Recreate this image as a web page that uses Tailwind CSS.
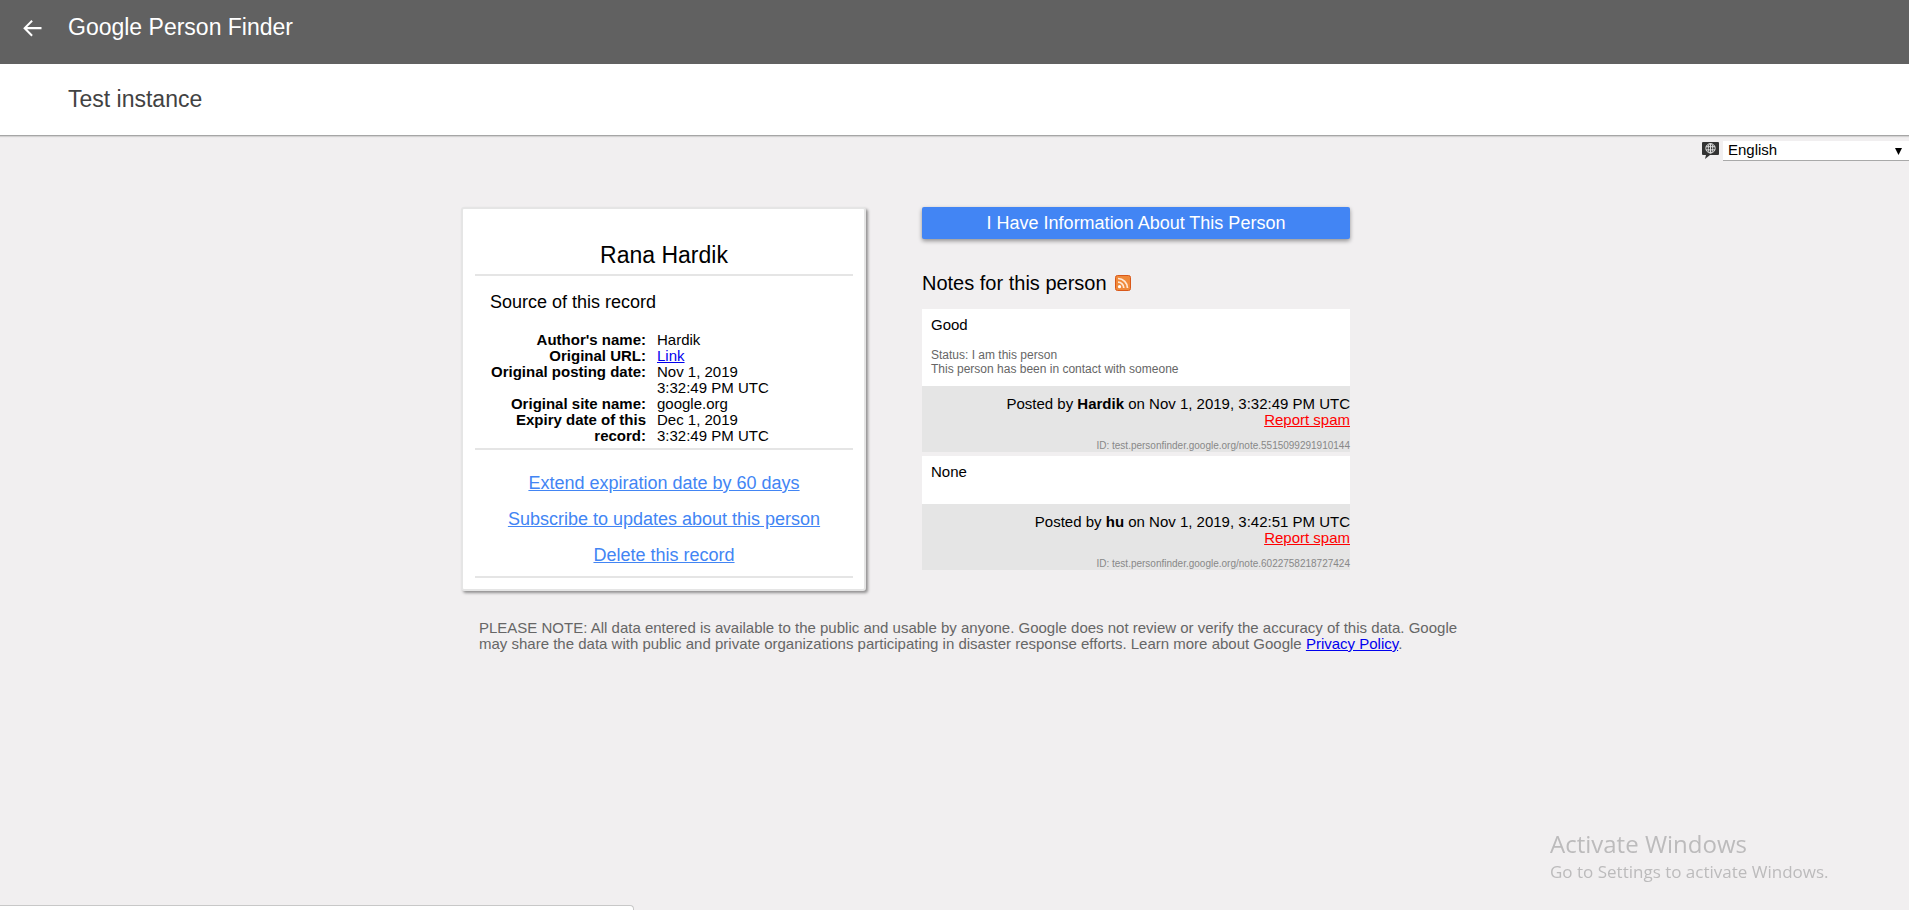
<!DOCTYPE html>
<html lang="en">
<head>
<meta charset="utf-8">
<meta name="viewport" content="width=device-width, initial-scale=1">
<title>Google Person Finder</title>
<script src="https://cdn.jsdelivr.net/npm/@tailwindcss/browser@4"></script>
</head>
<body class="relative min-h-screen overflow-x-hidden bg-[#f1eff0] font-['Liberation_Sans',Arial,sans-serif] text-[15px] leading-4 text-black">
<header>
  <div class="flex items-center bg-[#616161] pt-[13px] pb-[23px] pl-5 text-white">
    <a href="#" aria-label="Back" class="mr-6 block">
      <svg class="size-6" viewBox="0 0 24 24" fill="currentColor" aria-hidden="true"><path d="M21.500 12H7.200l5.600-5.600-1.400-1.400L3.200 13.200l8.200 8.200 1.400-1.400L7.200 14.200h14.300z"/></svg>
    </a>
    <span class="text-[23px] leading-7">Google Person Finder</span>
  </div>
  <div class="border-b border-[#a6a6a6] bg-white pt-[21px] pb-[22px] pl-[68px] shadow-[0_1px_1px_rgba(0,0,0,0.12)]">
    <h1 class="text-[23px] leading-7 text-[#424242]">Test instance</h1>
  </div>
</header>

<div class="flex items-start justify-end gap-1 pt-[5px]">
  <svg class="mt-px h-[17px] w-[17px]" viewBox="0 0 17 17" aria-hidden="true">
    <path d="M1 0h15q1 0 1 1v11q0 1-1 1H8l-5 4 1-4H1q-1 0-1-1V1q0-1 1-1z" fill="#333"/>
    <g fill="none" stroke="#ddd" stroke-width="1"><circle cx="8.500" cy="6.300" r="4.700"/><ellipse cx="8.500" cy="6.300" rx="2.200" ry="4.700"/><path d="M8.500 1.500v9.600M4 4.700h9M4 7.900h9"/></g>
  </svg>
  <div class="relative w-[186px]">
    <select aria-label="Language" class="block h-5 w-full appearance-none border-b border-[#a9a9a9] bg-white pb-px pl-[5px] text-[15px] leading-4"><option>English</option></select>
    <svg class="pointer-events-none absolute top-[7px] right-[7px] h-[7px] w-[7px]" viewBox="0 0 7 7" aria-hidden="true"><path d="M0 0h7L3.500 7z"/></svg>
  </div>
</div>

<main class="mx-auto max-w-[987px] pt-[46px]">
  <div class="flex items-start gap-14">
    <section class="w-[405px] shrink-0 rounded-[3px] border-2 border-[#e5e5e5] bg-white pt-8 pr-[11px] pb-[11px] pl-3 shadow-[2px_2px_3px_rgba(0,0,0,0.4)]">
      <h2 class="border-b-2 border-[#e5e5e5] pb-[5px] text-center text-[23px] leading-7">Rana Hardik</h2>
      <div class="border-b-2 border-[#e5e5e5] px-[15px] pt-3.5 pb-1">
        <h3 class="text-[18px] leading-6">Source of this record</h3>
        <table class="mt-[18px] border-collapse text-left align-top">
          <tbody>
            <tr><th scope="row" class="w-[156px] p-0 text-right align-top font-bold">Author's name:</th><td class="w-[130px] py-0 pr-0 pl-[11px] align-top">Hardik</td></tr>
            <tr><th scope="row" class="p-0 text-right align-top font-bold">Original URL:</th><td class="py-0 pr-0 pl-[11px] align-top"><a href="#" class="text-[#0000ee] underline">Link</a></td></tr>
            <tr><th scope="row" class="p-0 text-right align-top font-bold">Original posting date:</th><td class="py-0 pr-0 pl-[11px] align-top">Nov 1, 2019<br>3:32:49 PM UTC</td></tr>
            <tr><th scope="row" class="p-0 text-right align-top font-bold">Original site name:</th><td class="py-0 pr-0 pl-[11px] align-top">google.org</td></tr>
            <tr><th scope="row" class="p-0 text-right align-top font-bold">Expiry date of this record:</th><td class="py-0 pr-0 pl-[11px] align-top">Dec 1, 2019<br>3:32:49 PM UTC</td></tr>
          </tbody>
        </table>
      </div>
      <div class="flex flex-col items-center gap-4 border-b-2 border-[#e5e5e5] pt-[23px] pb-[11px] text-[18px] leading-5 text-[#4285f4]">
        <a href="#" class="underline">Extend expiration date by 60 days</a>
        <a href="#" class="underline">Subscribe to updates about this person</a>
        <a href="#" class="underline">Delete this record</a>
      </div>
    </section>

    <section class="w-[428px]">
      <button type="button" class="block h-8 w-full rounded-[2px] bg-[#4285f4] text-[18px] leading-8 text-white shadow-[0_2px_4px_rgba(0,0,0,0.4)]">I Have Information About This Person</button>
      <div class="mt-8 flex items-center gap-2">
        <h2 class="text-[20px] leading-6">Notes for this person</h2>
        <a href="#" aria-label="Notes feed">
          <svg class="size-4" viewBox="0 0 16 16" aria-hidden="true">
            <rect x="0.500" y="0.500" width="15" height="15" rx="2" fill="#f0893a" stroke="#d9581a"/>
            <circle cx="4.500" cy="11.700" r="1.600" fill="#fff"/>
            <path d="M3 7.200a5.800 5.800 0 0 1 5.800 5.800M3 3.500A9.500 9.500 0 0 1 12.500 13" fill="none" stroke="#ffe9d5" stroke-width="1.700"/>
          </svg>
        </a>
      </div>
      <div class="mt-3.5 flex flex-col gap-1">
        <article>
          <div class="bg-white px-[9px] pt-2 pb-2.5">
            <p>Good</p>
            <p class="mt-[15px] text-[12px] leading-3.5 text-[#666]">Status: I am this person<br>This person has been in contact with someone</p>
          </div>
          <footer class="bg-[#e5e5e5] pt-2.5 text-right">
            <p>Posted by <b>Hardik</b> on Nov 1, 2019, 3:32:49 PM UTC</p>
            <a href="#" class="text-[#ff0000] underline">Report spam</a>
            <p class="pt-3 text-[10px] leading-3 text-[#888]">ID: test.personfinder.google.org/note.5515099291910144</p>
          </footer>
        </article>
        <article>
          <div class="bg-white px-[9px] pt-2 pb-6">
            <p>None</p>
          </div>
          <footer class="bg-[#e5e5e5] pt-2.5 text-right">
            <p>Posted by <b>hu</b> on Nov 1, 2019, 3:42:51 PM UTC</p>
            <a href="#" class="text-[#ff0000] underline">Report spam</a>
            <p class="pt-3 text-[10px] leading-3 text-[#888]">ID: test.personfinder.google.org/note.6022758218727424</p>
          </footer>
        </article>
      </div>
    </section>
  </div>
  <p class="-mr-3 mt-[29px] ml-[18px] text-[#666]">PLEASE NOTE: All data entered is available to the public and usable by anyone. Google does not review or verify the accuracy of this data. Google may share the data with public and private organizations participating in disaster response efforts. Learn more about Google <a href="#" class="text-[#0000ee] underline">Privacy Policy</a>.</p>
</main>

<!-- Operating system activation notice -->
<div class="pointer-events-none fixed right-[74px] bottom-[26px] w-[285px] font-['Open_Sans','Noto_Sans',sans-serif] whitespace-nowrap text-[#bcbbbc]">
  <p class="text-[24px] leading-8">Activate Windows</p>
  <p class="text-[17px] leading-6">Go to Settings to activate Windows.</p>
</div>

<!-- Browser status bubble -->
<div class="fixed bottom-0 left-0 h-[5px] w-[634px] rounded-tr-[4px] border-t border-r border-[#c8c8c8] bg-white"></div>
</body>
</html>
